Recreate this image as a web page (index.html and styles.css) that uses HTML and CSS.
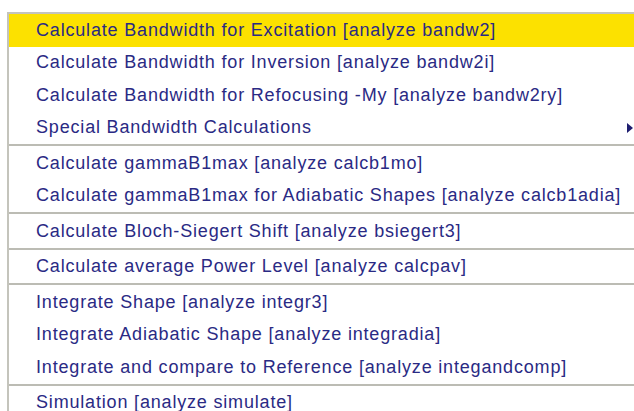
FILE: index.html
```html
<!DOCTYPE html>
<html>
<meta charset="utf-8">
<link rel="stylesheet" href="styles.css">

<head>
<title>Analyze menu</title>
</head>

<body>

<div class="menu">
  <div class="item active">Calculate Bandwidth for Excitation [analyze bandw2]</div>
  <div class="item">Calculate Bandwidth for Inversion [analyze bandw2i]</div>
  <div class="item">Calculate Bandwidth for Refocusing -My [analyze bandw2ry]</div>
  <div class="item sub">Special Bandwidth Calculations<span class="arrow"></span></div>
  <div class="sep"></div>
  <div class="item">Calculate gammaB1max [analyze calcb1mo]</div>
  <div class="item">Calculate gammaB1max for Adiabatic Shapes [analyze calcb1adia]</div>
  <div class="sep"></div>
  <div class="item">Calculate Bloch-Siegert Shift [analyze bsiegert3]</div>
  <div class="sep"></div>
  <div class="item">Calculate average Power Level [analyze calcpav]</div>
  <div class="sep"></div>
  <div class="item">Integrate Shape [analyze integr3]</div>
  <div class="item">Integrate Adiabatic Shape [analyze integradia]</div>
  <div class="item">Integrate and compare to Reference [analyze integandcomp]</div>
  <div class="sep"></div>
  <div class="item">Simulation [analyze simulate]</div>
</div>

</body>
</html>
```

FILE: styles.css
```css
body {
  margin: 0;
  background: #fff;
  font: 18px "Liberation Sans", Arial, sans-serif;
  overflow: hidden;
}

.menu {
  margin: 12px 0 0 7px;
  border-top: 2px solid #c4c4bc;
  border-left: 2px solid #c4c4bc;
  background: #fff;
}

.item {
  display: flex;
  align-items: center;
  height: 32.5px;
  padding-left: 27px;
  color: #2a2a84;
  letter-spacing: 0.82px;
  white-space: nowrap;
}

.item.active {
  background: #fce100;
}

.sub .arrow {
  margin-left: auto;
  margin-right: 1px;
  width: 0;
  height: 0;
  border-top: 5px solid transparent;
  border-bottom: 5px solid transparent;
  border-left: 6px solid #1e1e70;
}

.sep {
  height: 0;
  border-top: 2px solid #bcbcb4;
  margin-bottom: 1px;
}
```
